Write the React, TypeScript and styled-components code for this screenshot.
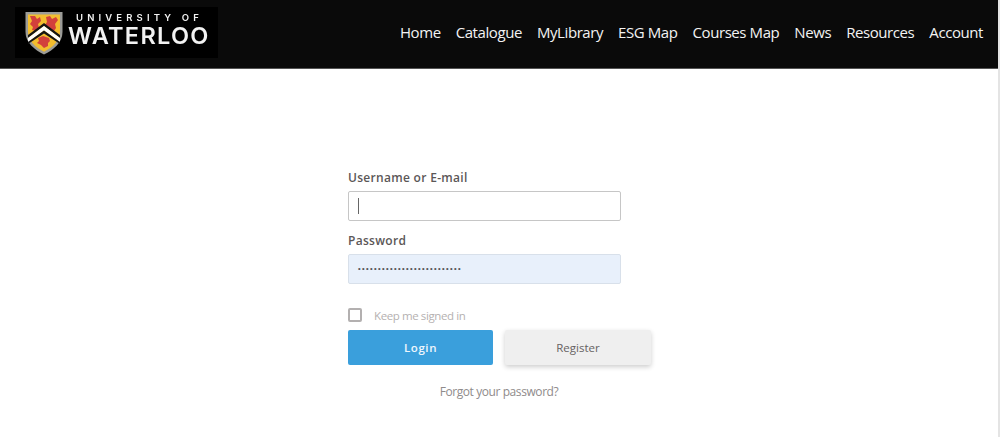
import React from 'react';
import styled, { createGlobalStyle } from 'styled-components';

const GlobalStyle = createGlobalStyle`
  html, body {
    margin: 0;
    padding: 0;
    background: #ffffff;
    font-family: "Open Sans", "Liberation Sans", sans-serif;
    overflow: hidden;
  }
  * { box-sizing: border-box; }
`;

const Page = styled.div`
  height: 437px;
  border-right: 2px solid #e4e4e4;
`;

const Header = styled.header`
  display: flex;
  justify-content: space-between;
  height: 69px;
  padding: 7px 15px 0 15px;
  background: #0a0a0a;
  border-bottom: 1px solid #555;
`;

const Logo = styled.a`
  display: flex;
  align-items: center;
  width: 203px;
  height: 51px;
  padding-left: 10px;
  background: #000;
`;

const LogoInner = styled.div`
  display: flex;
  align-items: center;
  gap: 5px;
  filter: blur(0.4px);
`;

const LogoText = styled.div`
  display: flex;
  flex-direction: column;
  padding-bottom: 7px;
  color: #f2f2f2;
  font-family: Inter, "Liberation Sans", Arial, sans-serif;
  line-height: 1;
`;

const LogoTop = styled.span`
  font-size: 9.5px;
  font-weight: 600;
  letter-spacing: 4.15px;
  margin-left: 8px;
  margin-bottom: 1px;
  line-height: 11px;
  white-space: nowrap;
`;

const LogoBottom = styled.span`
  font-size: 23.5px;
  font-weight: 600;
  letter-spacing: 1.3px;
  line-height: 23px;
  white-space: nowrap;
`;

const Nav = styled.nav`
  display: flex;
  gap: 15px;
  padding-top: 15px;
`;

const NavLink = styled.a`
  color: #f3f3f3;
  font-size: 15px;
  line-height: 21px;
  letter-spacing: -0.42px;
  white-space: nowrap;
`;

const Main = styled.main`
  width: 305px;
  margin-left: 348px;
  padding-top: 100px;
`;

const Field = styled.div`
  width: 273px;
  margin-bottom: 11px;
`;

const Label = styled.label`
  display: block;
  margin-bottom: 5px;
  color: #5b5757;
  font-size: 12px;
  font-weight: 600;
  letter-spacing: 0.3px;
  line-height: 17px;
`;

const Input = styled.div<{ $filled?: boolean }>`
  display: flex;
  align-items: center;
  height: 30px;
  padding-left: 9px;
  border: 1px solid ${p => (p.$filled ? '#d8e0ea' : '#c6c6c6')};
  border-radius: 2px;
  background: ${p => (p.$filled ? '#e8f0fb' : '#ffffff')};
`;

const Caret = styled.span`
  width: 1px;
  height: 16px;
  background: #666;
`;

const Dots = styled.span`
  color: #555;
  font-family: "Liberation Sans", Arial, sans-serif;
  font-size: 7.5px;
  letter-spacing: 1.37px;
  line-height: 1;
`;

const CheckRow = styled.div`
  display: flex;
  align-items: center;
  gap: 12px;
  margin-top: 23px;
  height: 16px;
`;

const CheckBox = styled.span`
  width: 14px;
  height: 14px;
  border: 2px solid #b3b0b0;
  border-radius: 2px;
`;

const CheckLabel = styled.span`
  color: #b5b1b1;
  font-size: 11.5px;
  letter-spacing: -0.4px;
`;

const Buttons = styled.div`
  display: flex;
  gap: 12px;
  margin-top: 7px;
`;

const Button = styled.button<{ $primary?: boolean }>`
  height: 35px;
  width: ${p => (p.$primary ? '145px' : '146px')};
  border: none;
  border-radius: 2px;
  font-family: inherit;
  font-size: 11.5px;
  font-weight: ${p => (p.$primary ? 600 : 400)};
  letter-spacing: ${p => (p.$primary ? '0.6px' : '0')};
  color: ${p => (p.$primary ? '#eef6fc' : '#666262')};
  background: ${p => (p.$primary ? '#3a9fdc' : '#efefef')};
  box-shadow: ${p => (p.$primary ? 'none' : '0 2px 5px rgba(0, 0, 0, 0.2)')};
`;

const Forgot = styled.a`
  display: block;
  margin-top: 18px;
  margin-right: 3px;
  color: #8f8b8b;
  font-size: 12px;
  letter-spacing: -0.42px;
  line-height: 17px;
  text-align: center;
`;

const navItems = ['Home', 'Catalogue', 'MyLibrary', 'ESG Map', 'Courses Map', 'News', 'Resources', 'Account'];

const Crest = () => (
  <svg width="38" height="44" viewBox="0 0 38 44">
    <path d="M0.5 1 H37.5 V21 C37.5 32 28 39 19 43.5 C10 39 0.5 32 0.5 21 Z" fill="#9b9b97" />
    <path d="M3 3.5 H35 V21 C35 30.5 27 36.5 19 40.8 C11 36.5 3 30.5 3 21 Z" fill="#f3bd2f" />
    <path d="M5 5 l5 0 l2 3 l3 -2 l1 4 l-3 3 l1 4 l-2 3 l-5 -1 l1 -3 l-3 -3 l2 -3 Z" fill="#d2403c" />
    <path d="M21 6 l4 -1 l2 3 l4 -2 l2 3 l-3 4 l1 4 l-2 3 l-5 -1 l0 -3 l-4 -2 l2 -3 Z" fill="#d2403c" />
    <path d="M13 27 l5 -2 l6 2 l1 3 l-2 2 l0 3 l-4 2 l-3 -3 l-4 -2 l2 -2 Z" fill="#d2403c" />
    <path d="M3 24 L19 12 L35 24 V27 L19 15 L3 27 Z" fill="#151515" />
    <path d="M3 27 L19 15 L35 27 V31 L19 19.5 L3 31 Z" fill="#ffffff" />
    <path d="M3 31 L19 19.5 L35 31 V33 L19 22.5 L3 33 Z" fill="#151515" />
  </svg>
);

const App: React.FC = () => (
  <Page>
    <GlobalStyle />
    <Header>
      <Logo>
        <LogoInner>
          <Crest />
          <LogoText>
            <LogoTop>UNIVERSITY OF</LogoTop>
            <LogoBottom>WATERLOO</LogoBottom>
          </LogoText>
        </LogoInner>
      </Logo>
      <Nav>
        {navItems.map(item => (
          <NavLink key={item}>{item}</NavLink>
        ))}
      </Nav>
    </Header>
    <Main>
      <Field>
        <Label>Username or E-mail</Label>
        <Input>
          <Caret />
        </Input>
      </Field>
      <Field>
        <Label>Password</Label>
        <Input $filled>
          <Dots>{'•'.repeat(26)}</Dots>
        </Input>
      </Field>
      <CheckRow>
        <CheckBox />
        <CheckLabel>Keep me signed in</CheckLabel>
      </CheckRow>
      <Buttons>
        <Button $primary>Login</Button>
        <Button>Register</Button>
      </Buttons>
      <Forgot>Forgot your password?</Forgot>
    </Main>
  </Page>
);

export default App;
